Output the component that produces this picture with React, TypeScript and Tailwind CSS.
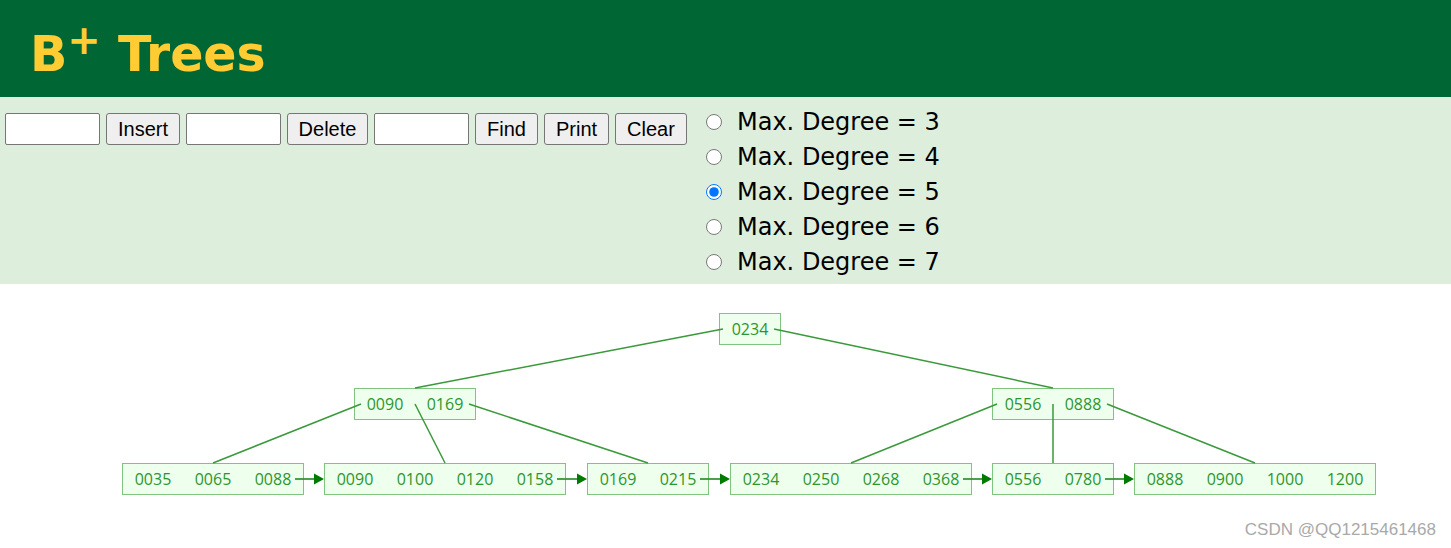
import React from "react";

type Node = { x: number; y: number; keys: string[] };

const CELL = 60;
const H = 31;

const root: Node = { x: 719, y: 29, keys: ["0234"] };
const inner: Node[] = [
  { x: 354, y: 104, keys: ["0090", "0169"] },
  { x: 992, y: 104, keys: ["0556", "0888"] },
];
const leaves: Node[] = [
  { x: 122, y: 179, keys: ["0035", "0065", "0088"] },
  { x: 324, y: 179, keys: ["0090", "0100", "0120", "0158"] },
  { x: 587, y: 179, keys: ["0169", "0215"] },
  { x: 730, y: 179, keys: ["0234", "0250", "0268", "0368"] },
  { x: 992, y: 179, keys: ["0556", "0780"] },
  { x: 1134, y: 179, keys: ["0888", "0900", "1000", "1200"] },
];

// parent pointer -> child top
const edges: [number, number, number, number][] = [
  [723, 45, 415, 104],
  [774, 45, 1053, 104],
  [361, 120, 213, 179],
  [415, 120, 445, 179],
  [469, 120, 648, 179],
  [997, 120, 851, 179],
  [1053, 120, 1053, 179],
  [1107, 120, 1255, 179],
];

const widthOf = (n: Node) => n.keys.length * CELL + 1;

function TreeNode({ node }: { node: Node }) {
  return (
    <g>
      <rect x={node.x + 0.5} y={node.y + 0.5} width={widthOf(node)} height={H} fill="#eeffee" stroke="#80c480" strokeWidth={1} />
      {node.keys.map((k, i) => (
        <text
          key={i}
          x={node.x + 1 + i * CELL + CELL / 2}
          y={node.y + 21.5}
          textAnchor="middle"
          fontSize={16}
          fill="#2c962c"
          style={{ fontFamily: '"Open Sans", "Noto Sans", sans-serif' }}
        >
          {k}
        </text>
      ))}
    </g>
  );
}

function Tree() {
  return (
    <svg width={1451} height={264} className="block">
      {[root, ...inner, ...leaves].map((n, i) => (
        <TreeNode key={i} node={n} />
      ))}
      {edges.map(([x1, y1, x2, y2], i) => (
        <line key={i} x1={x1} y1={y1} x2={x2} y2={y2} stroke="#3a993a" strokeWidth={1.5} />
      ))}
      {leaves.slice(0, -1).map((n, i) => {
        const from = n.x + widthOf(n) - 8;
        const to = leaves[i + 1].x;
        const y = n.y + 16;
        return (
          <g key={i}>
            <line x1={from} y1={y} x2={to - 8} y2={y} stroke="#2f8f2f" strokeWidth={1.7} />
            <polygon points={`${to - 10},${y - 5.5} ${to},${y} ${to - 10},${y + 5.5}`} fill="#007a00" />
          </g>
        );
      })}
    </svg>
  );
}

function Btn({ label, w }: { label: string; w: string }) {
  return (
    <button className={`${w} h-[32px] rounded-[3px] border border-[#767676] bg-[#efefef] text-[20px] leading-none text-black`}>
      {label}
    </button>
  );
}

function Field() {
  return <input className="h-[32px] w-[95px] rounded-[2px] border border-[#767676] bg-white" />;
}

export default function App() {
  return (
    <div className="w-[1451px] h-[548px] overflow-hidden bg-white" style={{ fontFamily: '"Liberation Sans", Arial, sans-serif' }}>
      <header className="h-[97px] bg-[#006633] pl-[30px] pt-[31px]">
        <h1 className="text-[49px] font-bold leading-[48px] text-[#ffcc33]" style={{ fontFamily: '"DejaVu Sans", Verdana, sans-serif' }}>
          B<sup className="relative -top-[17px] text-[40px]">+</sup> Trees
        </h1>
      </header>

      <section className="flex h-[187px] bg-[#ddeedd]">
        <div className="flex items-start gap-[6px] pl-[5px] pt-[16px]">
          <Field />
          <Btn label="Insert" w="w-[74px]" />
          <Field />
          <Btn label="Delete" w="w-[81px]" />
          <Field />
          <Btn label="Find" w="w-[63px]" />
          <Btn label="Print" w="w-[65px]" />
          <Btn label="Clear" w="w-[72px]" />
        </div>
        <div className="ml-[19px] flex flex-col pt-[7px]" style={{ fontFamily: '"DejaVu Sans", Verdana, sans-serif' }}>
          {[3, 4, 5, 6, 7].map((d) => (
            <label key={d} className="flex h-[35px] items-center gap-[15px] text-[24px] text-black">
              <input type="radio" name="degree" defaultChecked={d === 5} className="m-0 h-[16px] w-[16px]" />
              <span>Max. Degree = {d}</span>
            </label>
          ))}
        </div>
      </section>

      <div className="relative h-[264px]">
        <Tree />
        <span className="absolute right-[15px] top-[236px] text-[17px] leading-[20px] text-[#a9a9a9]">CSDN @QQ1215461468</span>
      </div>
    </div>
  );
}
